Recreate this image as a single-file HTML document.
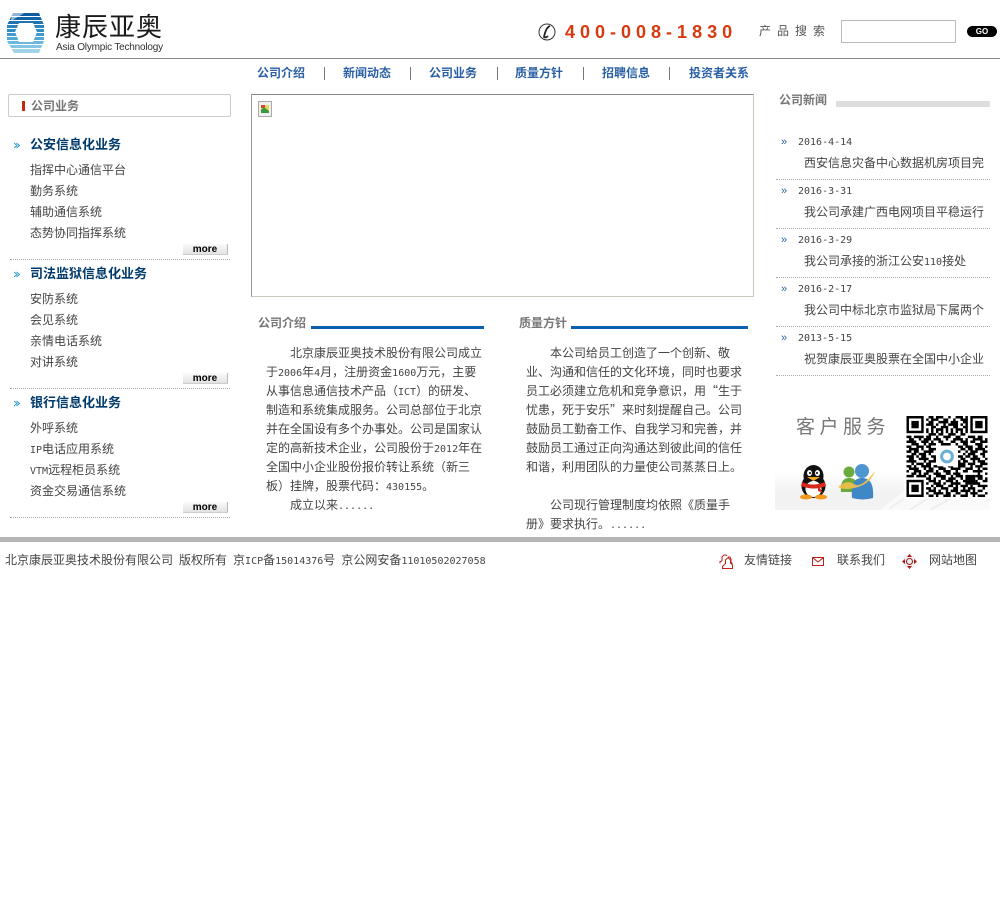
<!DOCTYPE html>
<html lang="zh-CN">
<head>
<meta charset="utf-8">
<title>康辰亚奥</title>
<style>
html,body{margin:0;padding:0;background:#fff;}
body{position:relative;width:1000px;height:909px;overflow:hidden;font-family:"WenQuanYi Zen Hei","Noto Sans CJK SC",sans-serif;font-size:12px;color:#444;}
.t{position:absolute;white-space:nowrap;line-height:18px;height:18px;}
.m{font-family:"DejaVu Sans Mono","Liberation Mono",monospace;font-size:10px;}
.sp{display:inline-block;width:6px;}
.r{position:absolute;}
.n{font-family:"Liberation Sans","Noto Sans CJK SC",sans-serif;font-weight:bold;color:#2a5fa5;font-size:12px;}
.g{font-family:"Liberation Sans","Noto Sans CJK SC",sans-serif;font-weight:bold;color:#777;font-size:12px;}
.h{font-family:"Liberation Sans","Noto Sans CJK SC",sans-serif;font-weight:bold;color:#003a6c;font-size:13px;}
.sep{position:absolute;top:67px;width:1px;height:13px;background:#777;}
.dot{position:absolute;height:0;border-top:1px dotted #aaa;}
.more{position:absolute;left:183px;width:45px;height:11px;background:linear-gradient(#fafafa,#e2e2e2);border-right:1px solid #bbb;border-bottom:1px solid #ccc;box-sizing:border-box;font:bold 10px/11px "Liberation Sans",sans-serif;color:#000;text-align:center;}
.arrow{position:absolute;left:781px;font:11px/12px "Liberation Sans",sans-serif;color:#2a5fa5;}
</style>
</head>
<body>

<!-- logo -->
<svg class="r" style="left:6px;top:12px" width="40" height="42" viewBox="0 0 40 42">
<defs><clipPath id="lg"><path d="M7 1H33L38 13V29L33 41H8L1 29V13Z"/></clipPath></defs>
<g clip-path="url(#lg)">
<rect x="0" y="1" width="40" height="3" fill="#0a5c9e"/>
<rect x="0" y="5" width="40" height="3" fill="#0f63a6"/>
<rect x="0" y="9" width="40" height="3" fill="#1d74ae"/>
<rect x="0" y="13" width="40" height="3" fill="#2a85bd"/>
<rect x="0" y="17" width="40" height="3" fill="#2f8ec4"/>
<rect x="0" y="21" width="40" height="3" fill="#3f9bcc"/>
<rect x="0" y="25" width="40" height="3" fill="#55a8d4"/>
<rect x="0" y="29" width="40" height="3" fill="#6db6dc"/>
<rect x="0" y="33" width="40" height="3" fill="#86c4e3"/>
<rect x="0" y="37" width="40" height="4" fill="#a2d2ea"/>
</g>
<path d="M13 11H27L31 20 27 30H13L9 20Z" fill="#fff"/>
<path d="M6 0H20L10 6 5 9Z" fill="#fff" opacity=".55"/>
</svg>
<div class="t" style="left:55px;top:9px;height:34px;line-height:34px;font-family:'Noto Sans CJK SC',sans-serif;font-size:26px;letter-spacing:1px;color:#1a1a1a;font-weight:400">康辰亚奥</div>
<div class="t" style="left:56px;top:39px;font-family:'Liberation Sans',sans-serif;font-size:10px;color:#333;letter-spacing:-.2px">Asia Olympic Technology</div>

<!-- phone -->
<svg class="r" style="left:538px;top:23px" width="18" height="18" viewBox="0 0 18 18">
<circle cx="9" cy="9" r="8" fill="#fff" stroke="#333" stroke-width="1"/>
<path d="M12 3C9 4 7 9 6 14c1 1 3 0 4-1" fill="none" stroke="#222" stroke-width="1.8"/>
</svg>
<div class="t" style="left:565px;top:22px;height:20px;line-height:20px;font-family:'Liberation Sans',sans-serif;font-weight:bold;font-size:18px;letter-spacing:5px;color:#d8390f">400-008-1830</div>
<div class="t" style="left:759px;top:22px;letter-spacing:6px;color:#555">产品搜索</div>
<div class="r" style="left:841px;top:20px;width:115px;height:23px;box-sizing:border-box;border:1px solid #bbb;background:#fff"></div>
<div class="r" style="left:967px;top:26px;width:30px;height:11px;border-radius:6px;background:#000;color:#fff;font:bold 8px/11px 'Liberation Sans',sans-serif;text-align:center">GO</div>
<div class="r" style="left:0;top:58px;width:1000px;height:1px;background:#888"></div>

<!-- nav -->
<div class="t n" style="left:257px;top:64px">公司介绍</div>
<div class="sep" style="left:324px"></div>
<div class="t n" style="left:343px;top:64px">新闻动态</div>
<div class="sep" style="left:410px"></div>
<div class="t n" style="left:429px;top:64px">公司业务</div>
<div class="sep" style="left:497px"></div>
<div class="t n" style="left:515px;top:64px">质量方针</div>
<div class="sep" style="left:583px"></div>
<div class="t n" style="left:602px;top:64px">招聘信息</div>
<div class="sep" style="left:669px"></div>
<div class="t n" style="left:689px;top:64px">投资者关系</div>

<!-- left -->
<div class="r" style="left:8px;top:94px;width:223px;height:23px;box-sizing:border-box;border:1px solid #ccc;border-radius:2px"></div>
<div class="r" style="left:22px;top:101px;width:3px;height:10px;background:#c8280a"></div>
<div class="t g" style="left:31px;top:97px">公司业务</div>

<svg class="r" style="left:14px;top:142px" width="6" height="7"><path d="M0 1l3 2.500L0 6M2.500 1l3 2.500-3 2.500" fill="none" stroke="#2a9ac8" stroke-width="1"/></svg>
<div class="t h" style="left:30px;top:136px">公安信息化业务</div>
<div class="t" style="left:30px;top:161px">指挥中心通信平台</div>
<div class="t" style="left:30px;top:182px">勤务系统</div>
<div class="t" style="left:30px;top:203px">辅助通信系统</div>
<div class="t" style="left:30px;top:224px">态势协同指挥系统</div>
<div class="more" style="top:244px">more</div>
<div class="dot" style="left:10px;top:259px;width:220px"></div>

<svg class="r" style="left:14px;top:271px" width="6" height="7"><path d="M0 1l3 2.500L0 6M2.500 1l3 2.500-3 2.500" fill="none" stroke="#2a9ac8" stroke-width="1"/></svg>
<div class="t h" style="left:30px;top:265px">司法监狱信息化业务</div>
<div class="t" style="left:30px;top:290px">安防系统</div>
<div class="t" style="left:30px;top:311px">会见系统</div>
<div class="t" style="left:30px;top:332px">亲情电话系统</div>
<div class="t" style="left:30px;top:353px">对讲系统</div>
<div class="more" style="top:373px">more</div>
<div class="dot" style="left:10px;top:388px;width:220px"></div>

<svg class="r" style="left:14px;top:400px" width="6" height="7"><path d="M0 1l3 2.500L0 6M2.500 1l3 2.500-3 2.500" fill="none" stroke="#2a9ac8" stroke-width="1"/></svg>
<div class="t h" style="left:30px;top:394px">银行信息化业务</div>
<div class="t" style="left:30px;top:419px">外呼系统</div>
<div class="t" style="left:30px;top:440px"><span class="m">IP</span>电话应用系统</div>
<div class="t" style="left:30px;top:461px"><span class="m">VTM</span>远程柜员系统</div>
<div class="t" style="left:30px;top:482px">资金交易通信系统</div>
<div class="more" style="top:502px">more</div>
<div class="dot" style="left:10px;top:517px;width:220px"></div>

<!-- center box -->
<div class="r" style="left:251px;top:94px;width:503px;height:203px;box-sizing:border-box;border:1px solid #ccc8bb;border-top-color:#888;border-left-color:#999"></div>
<svg class="r" style="left:258px;top:101px" width="14" height="16" viewBox="0 0 14 16">
<rect x=".5" y=".5" width="13" height="15" fill="#f0f0f0" stroke="#aaa"/>
<rect x="3" y="4" width="8" height="8" fill="#e8d85a"/>
<path d="M3 4h4v3H3z" fill="#d8453a"/><path d="M3 9l3-3 5 4v2H3z" fill="#3c9a3c"/>
</svg>

<!-- intro -->
<div class="t g" style="left:258px;top:314px">公司介绍</div>
<div class="r" style="left:311px;top:326px;width:173px;height:3px;background:#0a5fae"></div>
<div class="t" style="left:290px;top:344px">北京康辰亚奥技术股份有限公司成立</div>
<div class="t" style="left:266px;top:363px">于<span class="m">2006</span>年<span class="m">4</span>月，注册资金<span class="m">1600</span>万元，主要</div>
<div class="t" style="left:266px;top:382px">从事信息通信技术产品（<span class="m">ICT</span>）的研发、</div>
<div class="t" style="left:266px;top:401px">制造和系统集成服务。公司总部位于北京</div>
<div class="t" style="left:266px;top:420px">并在全国设有多个办事处。公司是国家认</div>
<div class="t" style="left:266px;top:439px">定的高新技术企业，公司股份于<span class="m">2012</span>年在</div>
<div class="t" style="left:266px;top:458px">全国中小企业股份报价转让系统（新三</div>
<div class="t" style="left:266px;top:477px">板）挂牌，股票代码：<span class="m">430155</span>。</div>
<div class="t" style="left:290px;top:496px">成立以来<span class="m">......</span></div>

<!-- quality -->
<div class="t g" style="left:519px;top:314px">质量方针</div>
<div class="r" style="left:571px;top:326px;width:177px;height:3px;background:#0a5fae"></div>
<div class="t" style="left:550px;top:344px">本公司给员工创造了一个创新、敬</div>
<div class="t" style="left:526px;top:363px">业、沟通和信任的文化环境，同时也要求</div>
<div class="t" style="left:526px;top:382px">员工必须建立危机和竞争意识，用“生于</div>
<div class="t" style="left:526px;top:401px">忧患，死于安乐”来时刻提醒自己。公司</div>
<div class="t" style="left:526px;top:420px">鼓励员工勤奋工作、自我学习和完善，并</div>
<div class="t" style="left:526px;top:439px">鼓励员工通过正向沟通达到彼此间的信任</div>
<div class="t" style="left:526px;top:458px">和谐，利用团队的力量使公司蒸蒸日上。</div>
<div class="t" style="left:550px;top:496px">公司现行管理制度均依照《质量手</div>
<div class="t" style="left:526px;top:515px">册》要求执行。<span class="m">......</span></div>

<!-- right news -->
<div class="t g" style="left:779px;top:91px">公司新闻</div>
<div class="r" style="left:836px;top:101px;width:154px;height:6px;background:#ddd"></div>

<div class="arrow" style="left:781px;top:136px">»</div>
<div class="t m" style="left:798px;top:134px;font-size:10px">2016-4-14</div>
<div class="t" style="left:804px;top:154px">西安信息灾备中心数据机房项目完</div>
<div class="dot" style="left:776px;top:179px;width:214px"></div>

<div class="arrow" style="left:781px;top:185px">»</div>
<div class="t m" style="left:798px;top:183px;font-size:10px">2016-3-31</div>
<div class="t" style="left:804px;top:203px">我公司承建广西电网项目平稳运行</div>
<div class="dot" style="left:776px;top:228px;width:214px"></div>

<div class="arrow" style="left:781px;top:234px">»</div>
<div class="t m" style="left:798px;top:232px;font-size:10px">2016-3-29</div>
<div class="t" style="left:804px;top:252px">我公司承接的浙江公安<span class="m">110</span>接处</div>
<div class="dot" style="left:776px;top:277px;width:214px"></div>

<div class="arrow" style="left:781px;top:283px">»</div>
<div class="t m" style="left:798px;top:281px;font-size:10px">2016-2-17</div>
<div class="t" style="left:804px;top:301px">我公司中标北京市监狱局下属两个</div>
<div class="dot" style="left:776px;top:326px;width:214px"></div>

<div class="arrow" style="left:781px;top:332px">»</div>
<div class="t m" style="left:798px;top:330px;font-size:10px">2013-5-15</div>
<div class="t" style="left:804px;top:350px">祝贺康辰亚奥股票在全国中小企业</div>
<div class="dot" style="left:776px;top:375px;width:214px"></div>

<!-- customer service -->
<div class="r" style="left:775px;top:470px;width:215px;height:40px;background:linear-gradient(#fff,#f2f2f2 60%,#f3f3f3)"></div>
<svg class="r" style="left:880px;top:478px" width="110" height="32"><path d="M0 32L40 0h30l40 24v8z" fill="#fafafa"/><path d="M10 30L46 6M30 32L66 8M50 32L86 12" stroke="#eeeeee" stroke-width="2"/></svg>
<div class="t" style="left:796px;top:413px;height:26px;line-height:26px;font-family:'Noto Sans CJK SC',sans-serif;font-size:19px;letter-spacing:4.500px;color:#777;font-weight:400">客户服务</div>

<svg class="r" style="left:797px;top:464px" width="33" height="36" viewBox="0 0 33 36">
<ellipse cx="16.500" cy="22" rx="12" ry="12" fill="#111"/>
<ellipse cx="16.500" cy="12" rx="10" ry="11" fill="#111"/>
<ellipse cx="16.500" cy="25" rx="8" ry="8" fill="#fff"/>
<ellipse cx="12.500" cy="9" rx="2.500" ry="3" fill="#fff"/><ellipse cx="20.500" cy="9" rx="2.500" ry="3" fill="#fff"/>
<circle cx="13" cy="9" r="1" fill="#000"/><circle cx="20" cy="9" r="1" fill="#000"/>
<path d="M10 13h13l-6.500 4z" fill="#f5a623"/>
<path d="M5 18q11 5 23 0l1 4q-12 5-25 0z" fill="#d8281c"/>
<path d="M21 21l5 8-5-2z" fill="#d8281c"/>
<ellipse cx="9" cy="33" rx="6" ry="2.500" fill="#f39a1e"/><ellipse cx="24" cy="33" rx="6" ry="2.500" fill="#f39a1e"/>
</svg>
<svg class="r" style="left:836px;top:464px" width="42" height="36" viewBox="0 0 42 36">
<circle cx="13" cy="8" r="5.500" fill="#6aab3e"/>
<path d="M5 28c-1-9 2-14 8-14s10 4 10 14z" fill="#6aab3e"/>
<circle cx="26" cy="7" r="7" fill="#4e96cf"/>
<path d="M16 34c-1-14 2-20 10-20s12 6 11 20q-10 3-21 0z" fill="#3f88c5"/>
<path d="M2 23q9-8 16-3t21-13q-4 12-17 16t-20 0z" fill="#f4c04a" opacity=".9"/>
</svg>

<!-- QR -->
<div class="r" style="left:904px;top:414px;width:86px;height:85px;background:#fff"></div>
<svg class="r" style="left:906px;top:416px" width="82" height="81" viewBox="0 0 33 33">
<g fill="none" stroke="#000" stroke-width="1">
<rect x=".5" y=".5" width="6" height="6"/><rect x="26.500" y=".5" width="6" height="6"/><rect x=".5" y="26.500" width="6" height="6"/>
</g>
<g fill="#000"><rect x="2" y="2" width="3" height="3"/><rect x="28" y="2" width="3" height="3"/><rect x="2" y="28" width="3" height="3"/><rect x="24" y="24" width="4" height="4"/></g>
<path stroke="#000" stroke-width="1" fill="none" d="M9 .5h2M12 .5h3M17 .5h1M20 .5h3M24 .5h1
M8 1.500h1M10 1.500h3M15 1.500h2M19 1.500h1M22 1.500h3
M9 2.500h2M13 2.500h4M18 2.500h3M23 2.500h2
M8 3.500h3M12 3.500h1M15 3.500h1M17 3.500h4M22 3.500h1M24 3.500h1
M10 4.500h2M14 4.500h3M19 4.500h2M23 4.500h2
M8 5.500h1M10 5.500h1M12 5.500h3M16 5.500h1M18 5.500h1M20 5.500h3M24 5.500h1
M8 6.500h1M10 6.500h1M12 6.500h1M14 6.500h1M16 6.500h1M18 6.500h1M20 6.500h1M22 6.500h1M24 6.500h1
M9 7.500h3M13 7.500h2M17 7.500h3M22 7.500h2
M0 8.500h2M3 8.500h4M8 8.500h2M12 8.500h1M15 8.500h3M20 8.500h2M25 8.500h3M29 8.500h2
M1 9.500h2M5 9.500h1M7 9.500h3M11 9.500h3M16 9.500h1M19 9.500h4M24 9.500h1M27 9.500h4M32 9.500h1
M0 10.500h4M6 10.500h3M10 10.500h1M13 10.500h2M18 10.500h2M22 10.500h3M26 10.500h2M30 10.500h3
M2 11.500h3M7 11.500h1M9 11.500h3M14 11.500h4M20 11.500h1M23 11.500h2M28 11.500h3
M0 12.500h2M4 12.500h3M8 12.500h2M21 12.500h2M24 12.500h3M29 12.500h2M32 12.500h1
M1 13.500h4M6 13.500h1M9 13.500h3M22 13.500h2M25 13.500h2M28 13.500h4
M0 14.500h2M3 14.500h2M7 14.500h4M21 14.500h1M24 14.500h1M26 14.500h3M31 14.500h2
M2 15.500h2M5 15.500h3M9 15.500h1M23 15.500h1M25 15.500h3M30 15.500h2
M0 16.500h3M4 16.500h1M6 16.500h2M10 16.500h2M21 16.500h2M24 16.500h2M27 16.500h2M31 16.500h1
M1 17.500h2M5 17.500h4M11 17.500h1M22 17.500h2M26 17.500h4M32 17.500h1
M0 18.500h4M7 18.500h1M9 18.500h3M21 18.500h1M23 18.500h2M27 18.500h1M29 18.500h3
M2 19.500h1M4 19.500h3M8 19.500h2M21 19.500h3M25 19.500h3M30 19.500h3
M0 20.500h2M3 20.500h1M6 20.500h4M11 20.500h4M17 20.500h2M21 20.500h3M26 20.500h1M28 20.500h3
M1 21.500h4M7 21.500h1M9 21.500h2M13 21.500h3M18 21.500h4M24 21.500h3M29 21.500h1M31 21.500h2
M0 22.500h1M3 22.500h3M8 22.500h3M12 22.500h1M15 22.500h3M20 22.500h1M23 22.500h2M27 22.500h4
M2 23.500h2M5 23.500h1M7 23.500h2M11 23.500h3M16 23.500h2M19 23.500h3M29 23.500h1M32 23.500h1
M0 24.500h3M4 24.500h4M9 24.500h1M12 24.500h4M18 24.500h1M20 24.500h3M28 24.500h3
M8 25.500h2M11 25.500h1M14 25.500h2M17 25.500h3M22 25.500h1M29 25.500h2M32 25.500h1
M9 26.500h3M13 26.500h1M16 26.500h3M20 26.500h1M23 26.500h4M28 26.500h1M31 26.500h2
M8 27.500h1M11 27.500h3M15 27.500h1M18 27.500h4M24 27.500h1M27 27.500h3
M10 28.500h1M12 28.500h3M17 28.500h2M20 28.500h1M22 28.500h3M26 28.500h1M29 28.500h4
M8 29.500h2M11 29.500h1M14 29.500h3M19 29.500h2M23 29.500h1M25 29.500h3M31 29.500h1
M9 30.500h3M13 30.500h1M16 30.500h1M18 30.500h3M22 30.500h4M27 30.500h1M29 30.500h2
M8 31.500h1M11 31.500h4M16 31.500h2M20 31.500h2M24 31.500h1M26 31.500h3M32 31.500h1
M9 32.500h2M12 32.500h1M15 32.500h3M19 32.500h1M22 32.500h3M27 32.500h1M29 32.500h3"/>
<rect x="12.500" y="12.500" width="8" height="8" fill="#fff"/>
<circle cx="16.500" cy="16.500" r="2.200" fill="none" stroke="#6aaed6" stroke-width="1.200"/>
</svg>

<!-- footer -->
<div class="r" style="left:0;top:537px;width:1000px;height:5px;background:#b5b5b5"></div>
<div class="t" style="left:5px;top:551px">北京康辰亚奥技术股份有限公司<span class="sp"></span>版权所有<span class="sp"></span>京<span class="m">ICP</span>备<span class="m">15014376</span>号<span class="sp"></span>京公网安备<span class="m">11010502027058</span></div>

<svg class="r" style="left:719px;top:554px" width="15" height="15" viewBox="0 0 15 15"><path d="M1 9.500V7.500h1l1-1V3l2-2h2l1 1M9 3h2l1 2v3l1 1v1M3.500 14.500v-2l2-2 1-1V6l2-2h1l2 2v3l2 2v3.500z" fill="none" stroke="#c0201a" stroke-width="1"/></svg>
<div class="t" style="left:744px;top:551px">友情链接</div>

<svg class="r" style="left:812px;top:557px" width="12" height="9" viewBox="0 0 12 9"><rect x=".5" y=".5" width="11" height="8" fill="#fff" stroke="#c0201a"/><path d="M1 1l5 4 5-4" fill="none" stroke="#c0201a"/></svg>
<div class="t" style="left:837px;top:551px">联系我们</div>

<svg class="r" style="left:902px;top:554px" width="15" height="15" viewBox="0 0 15 15"><circle cx="7.500" cy="7.500" r="7" fill="#eee"/><path d="M7.500 0l2.500 3H5zM7.500 15L5 12h5zM0 7.500L3 5v5zM15 7.500L12 10V5z" fill="#a81c1c"/><circle cx="7.500" cy="7.500" r="3" fill="none" stroke="#a81c1c"/></svg>
<div class="t" style="left:929px;top:551px">网站地图</div>

</body>
</html>
